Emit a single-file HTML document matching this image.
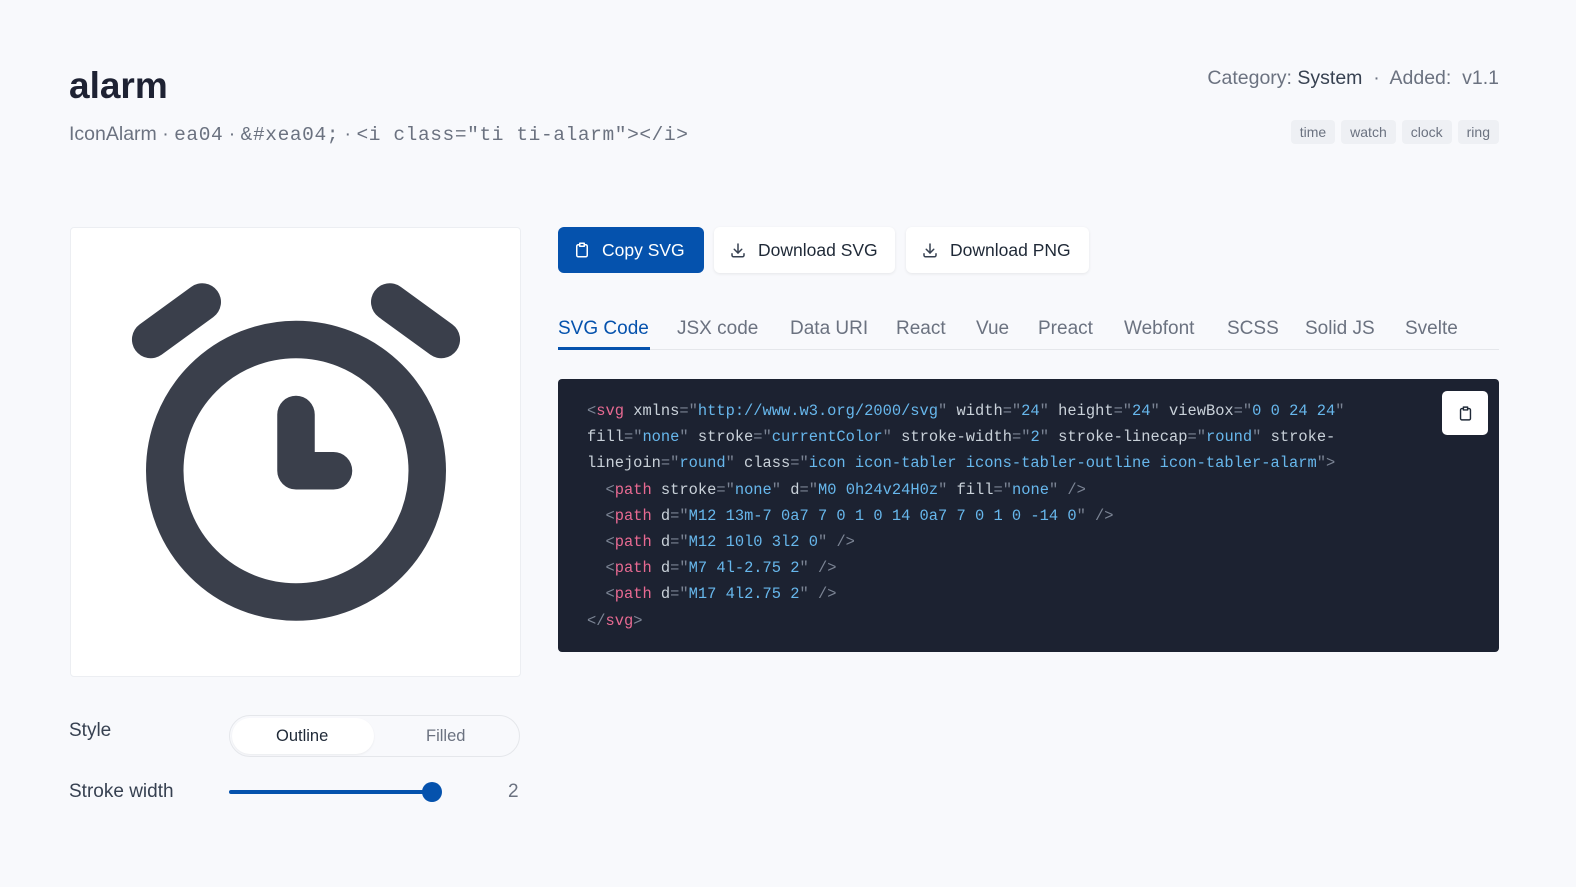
<!DOCTYPE html>
<html><head><meta charset="utf-8"><style>
*{box-sizing:border-box;margin:0;padding:0}
body{width:1576px;height:887px;background:#f8f9fc;font-family:"Liberation Sans",sans-serif;position:relative;overflow:hidden;color:#1f2937}
.a{position:absolute;white-space:nowrap}
.mono{font-family:"Liberation Mono",monospace}
.btn{position:absolute;top:227px;height:46px;border-radius:6px;background:#fff;box-shadow:0 1px 3px rgba(0,0,0,.08);font-size:17.5px;color:#1f2937;display:flex;align-items:center;padding-left:15px;gap:11px}
.tag{display:inline-block;background:#eef0f4;color:#6b7280;font-size:14px;padding:4px 9px;border-radius:4px;margin-left:6px}
.tab{position:absolute;top:318px;font-size:19px;color:#6b7280}
.code{position:absolute;left:558px;top:379px;width:941px;height:273px;background:#1c2231;border-radius:4px}
.code pre{position:absolute;left:29px;top:19px;font-family:"Liberation Mono",monospace;font-size:15.4px;line-height:26.2px;color:#c9d1d9}
.t{color:#e86a92}.s{color:#67b7ec}.p{color:#7b8494}
</style></head><body>
<div class="a" style="left:69px;top:65px;font-size:37px;font-weight:bold;color:#1e2233">alarm</div>
<div class="a" style="left:69px;top:123px;font-size:19.5px;color:#6b7280">IconAlarm · <span class="mono" style="letter-spacing:.6px">ea04</span> · <span class="mono" style="letter-spacing:.6px">&amp;#xea04;</span> · <span class="mono" style="letter-spacing:.6px">&lt;i class="ti ti-alarm"&gt;&lt;/i&gt;</span></div>
<div class="a" style="right:77px;top:67px;font-size:19.5px;color:#6b7280">Category: <span style="color:#374151">System</span> &nbsp;·&nbsp; Added:&nbsp; v1.1</div>
<div class="a" style="right:77px;top:120px"><span class="tag">time</span><span class="tag">watch</span><span class="tag">clock</span><span class="tag">ring</span></div>

<div class="a" style="left:70px;top:227px;width:451px;height:450px;background:#fff;border:1px solid #eceef2;border-radius:4px">
<svg width="450" height="450" viewBox="0 0 24 24" fill="none" stroke="#3a3f4b" stroke-width="2" stroke-linecap="round" stroke-linejoin="round" style="position:absolute;left:0;top:-1px"><path d="M12 13m-7 0a7 7 0 1 0 14 0a7 7 0 1 0 -14 0"/><path d="M12 10l0 3l2 0"/><path d="M7 4l-2.75 2"/><path d="M17 4l2.75 2"/></svg>
</div>

<div class="btn" style="left:558px;width:146px;background:#0552ad;color:#fff;box-shadow:none">
<svg width="18" height="18" viewBox="0 0 24 24" fill="none" stroke="#fff" stroke-width="2" stroke-linecap="round" stroke-linejoin="round"><path d="M9 5h-2a2 2 0 0 0 -2 2v12a2 2 0 0 0 2 2h10a2 2 0 0 0 2 -2v-12a2 2 0 0 0 -2 -2h-2"/><path d="M9 3h6v4h-6z"/></svg>Copy SVG</div>
<div class="btn" style="left:714px;width:181px">
<svg width="18" height="18" viewBox="0 0 24 24" fill="none" stroke="#374151" stroke-width="2" stroke-linecap="round" stroke-linejoin="round"><path d="M4 17v2a2 2 0 0 0 2 2h12a2 2 0 0 0 2 -2v-2"/><path d="M7 11l5 5l5 -5"/><path d="M12 4l0 12"/></svg>Download SVG</div>
<div class="btn" style="left:906px;width:183px">
<svg width="18" height="18" viewBox="0 0 24 24" fill="none" stroke="#374151" stroke-width="2" stroke-linecap="round" stroke-linejoin="round"><path d="M4 17v2a2 2 0 0 0 2 2h12a2 2 0 0 0 2 -2v-2"/><path d="M7 11l5 5l5 -5"/><path d="M12 4l0 12"/></svg>Download PNG</div>

<div class="a" style="left:558px;top:349px;width:941px;height:1px;background:#e5e7eb"></div>
<div class="tab" style="left:558px;color:#0552ad">SVG Code</div>
<div class="a" style="left:558px;top:347px;width:92px;height:3px;background:#0552ad"></div>
<div class="tab" style="left:677px">JSX code</div>
<div class="tab" style="left:790px">Data URI</div>
<div class="tab" style="left:896px">React</div>
<div class="tab" style="left:976px">Vue</div>
<div class="tab" style="left:1038px">Preact</div>
<div class="tab" style="left:1124px">Webfont</div>
<div class="tab" style="left:1227px">SCSS</div>
<div class="tab" style="left:1305px">Solid JS</div>
<div class="tab" style="left:1405px">Svelte</div>

<div class="code"><pre><span class="p">&lt;</span><span class="t">svg</span> xmlns<span class="p">="</span><span class="s">http://www.w3.org/2000/svg</span><span class="p">"</span> width<span class="p">="</span><span class="s">24</span><span class="p">"</span> height<span class="p">="</span><span class="s">24</span><span class="p">"</span> viewBox<span class="p">="</span><span class="s">0 0 24 24</span><span class="p">"</span>
fill<span class="p">="</span><span class="s">none</span><span class="p">"</span> stroke<span class="p">="</span><span class="s">currentColor</span><span class="p">"</span> stroke-width<span class="p">="</span><span class="s">2</span><span class="p">"</span> stroke-linecap<span class="p">="</span><span class="s">round</span><span class="p">"</span> stroke-
linejoin<span class="p">="</span><span class="s">round</span><span class="p">"</span> class<span class="p">="</span><span class="s">icon icon-tabler icons-tabler-outline icon-tabler-alarm</span><span class="p">"&gt;</span>
  <span class="p">&lt;</span><span class="t">path</span> stroke<span class="p">="</span><span class="s">none</span><span class="p">"</span> d<span class="p">="</span><span class="s">M0 0h24v24H0z</span><span class="p">"</span> fill<span class="p">="</span><span class="s">none</span><span class="p">" /&gt;</span>
  <span class="p">&lt;</span><span class="t">path</span> d<span class="p">="</span><span class="s">M12 13m-7 0a7 7 0 1 0 14 0a7 7 0 1 0 -14 0</span><span class="p">" /&gt;</span>
  <span class="p">&lt;</span><span class="t">path</span> d<span class="p">="</span><span class="s">M12 10l0 3l2 0</span><span class="p">" /&gt;</span>
  <span class="p">&lt;</span><span class="t">path</span> d<span class="p">="</span><span class="s">M7 4l-2.75 2</span><span class="p">" /&gt;</span>
  <span class="p">&lt;</span><span class="t">path</span> d<span class="p">="</span><span class="s">M17 4l2.75 2</span><span class="p">" /&gt;</span>
<span class="p">&lt;/</span><span class="t">svg</span><span class="p">&gt;</span></pre>
<div class="a" style="left:884px;top:12px;width:46px;height:44px;background:#fff;border-radius:5px;display:flex;align-items:center;justify-content:center">
<svg width="17" height="17" viewBox="0 0 24 24" fill="none" stroke="#1f2937" stroke-width="2" stroke-linecap="round" stroke-linejoin="round"><path d="M9 5h-2a2 2 0 0 0 -2 2v12a2 2 0 0 0 2 2h10a2 2 0 0 0 2 -2v-12a2 2 0 0 0 -2 -2h-2"/><path d="M9 3h6v4h-6z"/></svg></div>
</div>

<div class="a" style="left:69px;top:720px;font-size:19px;color:#374151">Style</div>
<div class="a" style="left:229px;top:715px;width:291px;height:42px;border:1px solid #e5e7eb;border-radius:21px;background:#f8f9fc">
<div class="a" style="left:2px;top:2px;width:142px;height:36px;background:#fff;border-radius:18px;box-shadow:0 1px 2px rgba(0,0,0,.06)"></div>
<div class="a" style="left:46px;top:11px;font-size:16.5px;color:#1f2937">Outline</div>
<div class="a" style="left:196px;top:11px;font-size:16.5px;color:#6b7280">Filled</div>
</div>
<div class="a" style="left:69px;top:781px;font-size:19px;color:#374151">Stroke width</div>
<div class="a" style="left:229px;top:790px;width:212px;height:4px;background:#0552ad;border-radius:2px"></div>
<div class="a" style="left:422px;top:782px;width:20px;height:20px;background:#0552ad;border-radius:50%"></div>
<div class="a" style="left:508px;top:781px;font-size:19px;color:#6b7280">2</div>
</body></html>
